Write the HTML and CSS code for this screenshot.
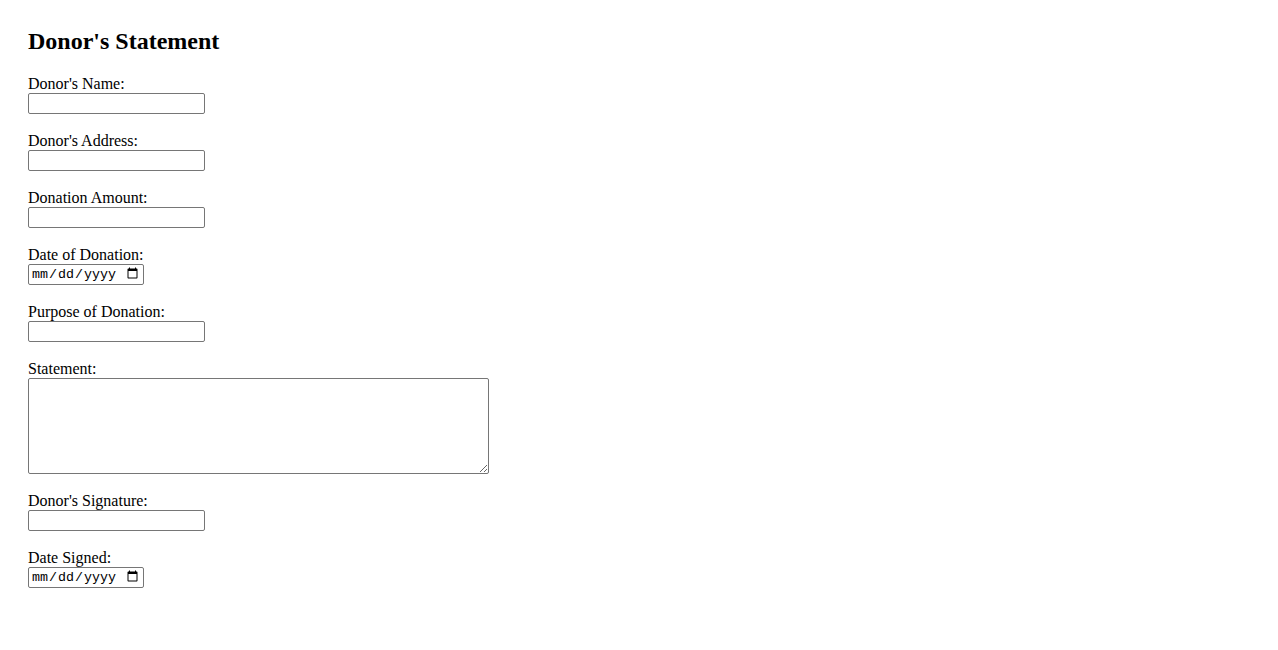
FILE: index.html
```html
<!DOCTYPE html>
<html lang="en">
<head>
<meta charset="utf-8">
<title>Donor's Statement</title>
<link rel="stylesheet" href="styles.css">
</head>
<body>
<h2 class="title">Donor's Statement</h2>
<form class="form">
  <div class="field">
    <label class="label" for="name">Donor's Name:</label>
    <input class="text-input" type="text" id="name">
  </div>
  <div class="field">
    <label class="label" for="address">Donor's Address:</label>
    <input class="text-input" type="text" id="address">
  </div>
  <div class="field">
    <label class="label" for="amount">Donation Amount:</label>
    <input class="text-input" type="text" id="amount">
  </div>
  <div class="field">
    <label class="label" for="date">Date of Donation:</label>
    <input class="date-input" type="date" id="date">
  </div>
  <div class="field">
    <label class="label" for="purpose">Purpose of Donation:</label>
    <input class="text-input" type="text" id="purpose">
  </div>
  <div class="field">
    <label class="label" for="statement">Statement:</label>
    <textarea class="textarea" id="statement"></textarea>
  </div>
  <div class="field">
    <label class="label" for="signature">Donor's Signature:</label>
    <input class="text-input" type="text" id="signature">
  </div>
  <div class="field">
    <label class="label" for="signed">Date Signed:</label>
    <input class="date-input" type="date" id="signed">
  </div>
</form>
</body>
</html>
```
FILE: styles.css
```css
html, body {
  background: #ffffff;
}
body {
  margin: 0;
  padding: 28px;
  font-family: "Liberation Serif", "Times New Roman", serif;
  font-size: 16px;
  color: #000000;
}
.title {
  margin: 0 0 19px 0;
  font-size: 24px;
  font-weight: bold;
  line-height: 27.6px;
}
.form {
  display: flex;
  flex-direction: column;
  align-items: flex-start;
}
.field {
  display: flex;
  flex-direction: column;
  align-items: flex-start;
  margin-bottom: 18px;
}
.label {
  display: block;
  line-height: 18px;
  height: 18px;
}
.text-input,
.date-input,
.textarea {
  display: block;
  box-sizing: border-box;
  margin: 0;
  border: 1px solid #767676;
  border-radius: 2px;
  background: #ffffff;
  font-family: "Liberation Mono", monospace;
  font-size: 13.333px;
}
.text-input {
  width: 177px;
  height: 21px;
  padding: 1px 2px;
}
.date-input {
  width: 116px;
  height: 21px;
  padding: 1px 2px;
  color: #000000;
}
.textarea {
  width: 461px;
  height: 96px;
  padding: 2px;
  resize: both;
}
```
